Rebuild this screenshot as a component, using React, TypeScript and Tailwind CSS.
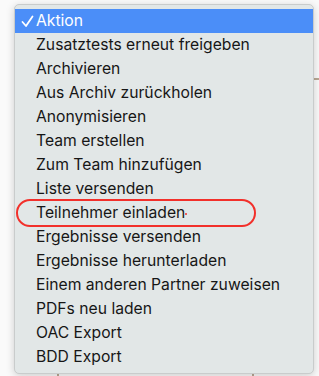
import React from "react";

const items = [
  "Zusatztests erneut freigeben",
  "Archivieren",
  "Aus Archiv zurückholen",
  "Anonymisieren",
  "Team erstellen",
  "Zum Team hinzufügen",
  "Liste versenden",
  "Teilnehmer einladen",
  "Ergebnisse versenden",
  "Ergebnisse herunterladen",
  "Einem anderen Partner zuweisen",
  "PDFs neu laden",
  "OAC Export",
  "BDD Export",
];

const marked = "Teilnehmer einladen";

export default function App() {
  return (
    <div className="relative h-[376px] w-[319px] overflow-hidden bg-[#fafafa] font-['Inter',sans-serif]">
      {/* page behind the menu */}
      <div className="absolute left-[300px] top-[78px] h-[2px] w-[30px] bg-[#b9a894]" />
      <div className="absolute left-[57px] top-[360px] h-[20px] w-[2px] bg-[#b9a894]" />
      <div className="absolute left-[252px] top-[360px] h-[20px] w-[2px] bg-[#b9a894]" />

      {/* menu */}
      <div className="relative ml-[14px] mt-[4px] flex w-[300px] flex-col rounded-[5px] border border-[#c9cccc] bg-[#e2e7e7] py-[4px] text-[15.7px] text-[#161616] shadow-[0_2px_8px_rgba(0,0,0,0.18)]">
        <div className="flex h-[24px] items-center bg-[#4b8ef8] text-white">
          <span className="flex w-[20px] justify-end pr-[1px]">
            <svg width="13" height="13" viewBox="0 0 13 13" fill="none">
              <path d="M1.5 7 L5 11 L11.5 1.5" stroke="white" strokeWidth="1.8" strokeLinecap="round" strokeLinejoin="round" />
            </svg>
          </span>
          <span className="pl-[1px]">Aktion</span>
        </div>
        {items.map((label) =>
          label === marked ? (
            <div
              key={label}
              className="relative z-10 -my-[2px] ml-[1px] flex h-[28px] w-[240px] items-center rounded-full border-2 border-[#f2302b] pl-[18px]"
            >
              {label}
              <span className="mt-[2px] h-[2px] w-[2px] rounded-full bg-[#f2302b]" />
            </div>
          ) : (
            <div key={label} className="flex h-[24px] items-center pl-[21px]">
              {label}
            </div>
          )
        )}
      </div>
    </div>
  );
}
